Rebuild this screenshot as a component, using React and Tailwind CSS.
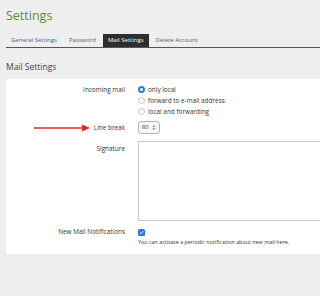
import React from "react"

/* ─── small form widgets ─── */
function Radio({ checked }) {
  if (checked) {
    return (
      <span className="inline-flex w-[7px] h-[7px] rounded-full bg-[#2a7ae2] items-center justify-center shrink-0">
        <span className="w-[3px] h-[3px] rounded-full bg-white" />
      </span>
    )
  }
  return <span className="inline-block w-[7px] h-[7px] rounded-full border border-[#c4c4c4] bg-white shrink-0" />
}

function Option({ checked, children }) {
  return (
    <div className="flex items-center gap-[3px] h-[11px]">
      <Radio checked={checked} />
      <span>{children}</span>
    </div>
  )
}

const tabs = ["General Settings", "Password", "Mail Settings", "Delete Account"]

export default function App() {
  return (
    <div className="relative w-[320px] h-[296px] overflow-hidden bg-[#eeeeee] pl-[6px] font-['Open_Sans',sans-serif] text-[#333]">
      {/* Title */}
      <h1 className="pt-[7px] text-[12.5px] leading-[18px] text-[#5d8a3f]">Settings</h1>

      {/* Tabs */}
      <div className="mt-[9px] flex gap-[2px] border-b border-[#555] w-[360px]">
        {tabs.map((t) => (
          <div
            key={t}
            className={
              t === "Mail Settings"
                ? "px-[5px] h-[13px] leading-[13px] text-[6px] bg-[#2e2e2e] text-white"
                : "px-[5px] h-[13px] leading-[13px] text-[6px] text-[#50627a]"
            }
          >
            {t}
          </div>
        ))}
      </div>

      {/* Section heading */}
      <h2 className="mt-[13px] text-[8.5px] leading-[12px] text-[#444]">Mail Settings</h2>

      {/* Panel */}
      <div className="mt-[6px] w-[360px] bg-white pt-[5px] pb-[7px] text-[6.4px]">
        {/* Incoming mail */}
        <div className="flex gap-[13px]">
          <div className="w-[119px] text-right leading-[11px]">Incoming mail</div>
          <div>
            <Option checked>only local</Option>
            <Option>forward to e-mail address</Option>
            <Option>local and forwarding</Option>
          </div>
        </div>

        {/* Line break */}
        <div className="mt-[4px] flex gap-[13px] items-center">
          <div className="w-[119px] text-right leading-[13px]">Line break</div>
          <div className="flex items-center gap-[4px] h-[13px] w-[22px] px-[3px] rounded-[3px] border border-[#b5b5b5] bg-[#f6f6f6] text-[5.5px]">
            <span>80</span>
            <svg width="5" height="7" viewBox="0 0 5 7" className="ml-auto">
              <path d="M1 2.6 2.5 1 4 2.6M1 4.4 2.5 6 4 4.4" fill="none" stroke="#333" strokeWidth="0.9" />
            </svg>
          </div>
        </div>

        {/* Signature */}
        <div className="mt-[7px] flex gap-[13px]">
          <div className="w-[119px] text-right leading-[11px] pt-[2px]">Signature</div>
          <div className="h-[80px] w-[200px] border border-[#c8c8c8] bg-white" />
        </div>

        {/* New mail notifications */}
        <div className="mt-[6px] flex gap-[13px]">
          <div className="w-[119px] text-right leading-[10px]">New Mail Notifications</div>
          <div>
            <div className="h-[10px] flex items-center">
              <span className="inline-flex w-[7px] h-[7px] rounded-[1.5px] bg-[#2a7ae2] items-center justify-center">
                <svg width="5" height="5" viewBox="0 0 5 5">
                  <path d="M0.9 2.6 2 3.7 4.1 1.2" fill="none" stroke="white" strokeWidth="0.9" />
                </svg>
              </span>
            </div>
            <div className="leading-[10px] text-[5.4px]">
              You can activate a periodic notification about new mail here.
            </div>
          </div>
        </div>
      </div>

      {/* Red annotation arrow */}
      <svg className="absolute left-[33px] top-[124px]" width="58" height="8" viewBox="0 0 58 8">
        <line x1="1" y1="4" x2="50" y2="4" stroke="#e3261b" strokeWidth="1.6" />
        <path d="M49 0.6 57 4 49 7.4Z" fill="#e3261b" />
      </svg>
    </div>
  )
}
